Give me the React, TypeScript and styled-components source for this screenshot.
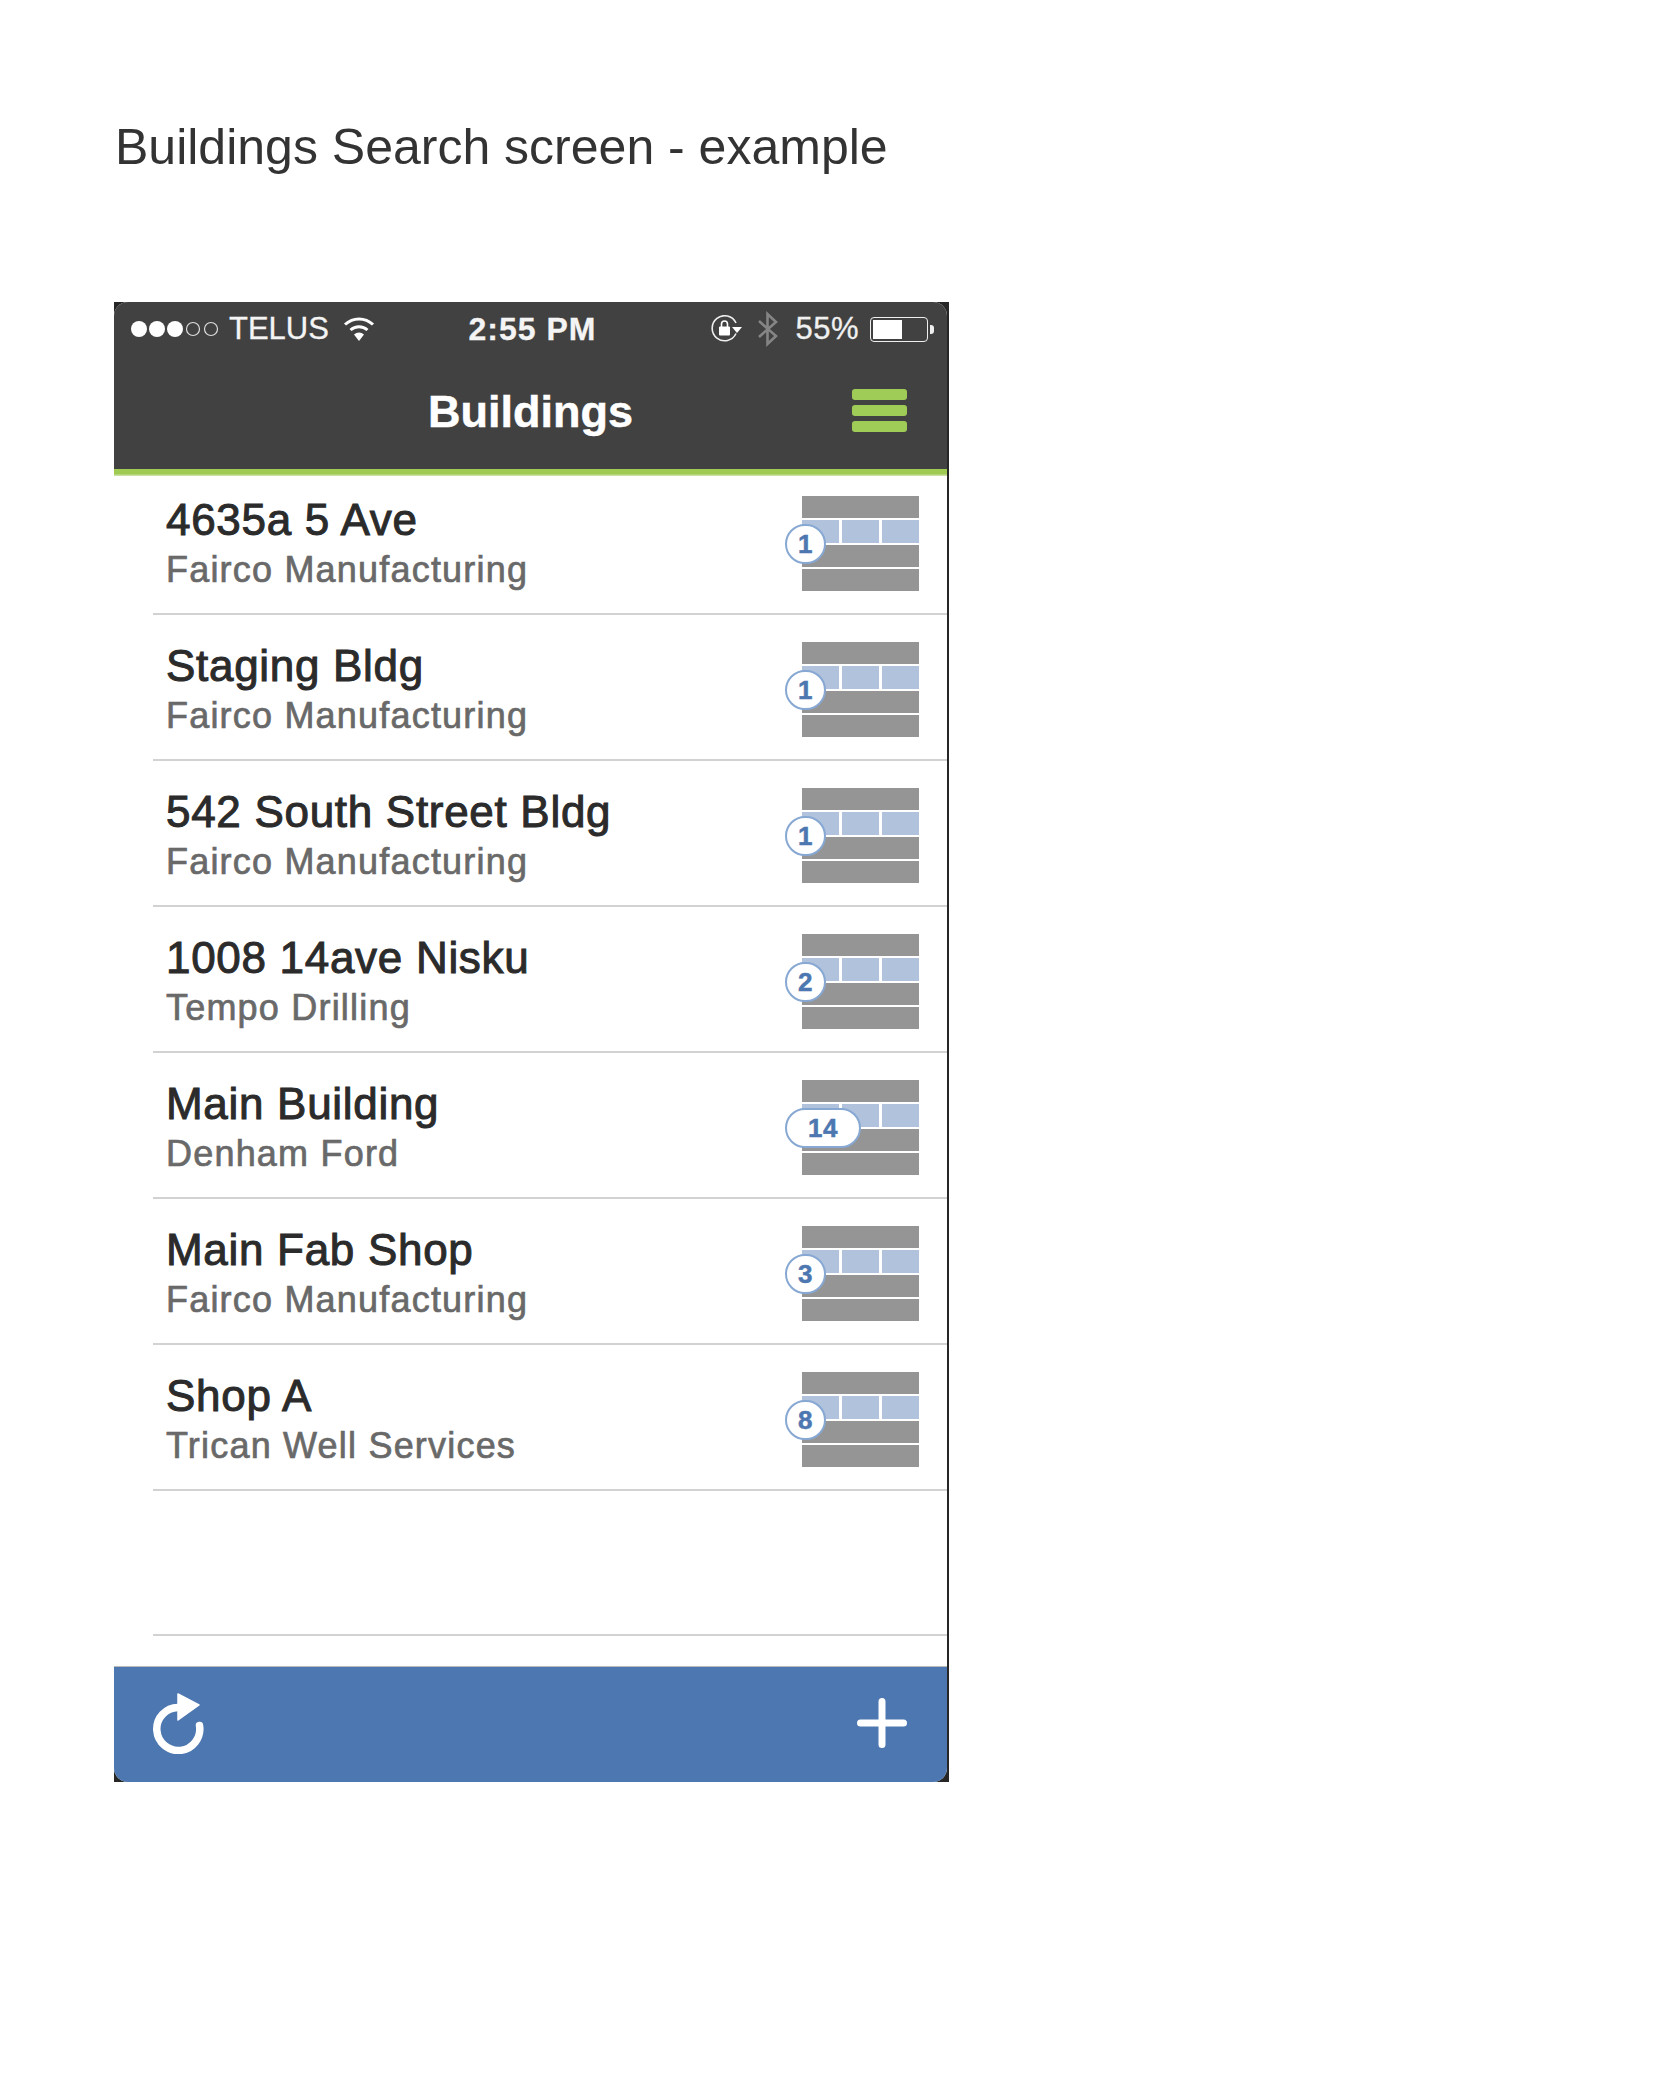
import styled, { createGlobalStyle } from "styled-components";

const buildings = [
  { name: "4635a 5 Ave", owner: "Fairco Manufacturing", count: 1 },
  { name: "Staging Bldg", owner: "Fairco Manufacturing", count: 1 },
  { name: "542 South Street Bldg", owner: "Fairco Manufacturing", count: 1 },
  { name: "1008 14ave Nisku", owner: "Tempo Drilling", count: 2 },
  { name: "Main Building", owner: "Denham Ford", count: 14 },
  { name: "Main Fab Shop", owner: "Fairco Manufacturing", count: 3 },
  { name: "Shop A", owner: "Trican Well Services", count: 8 },
];

export default function App() {
  return (
    <Page>
      <GlobalStyle />
      <Heading>Buildings Search screen - example</Heading>
      <Phone>
        <Screen>
          <Header>
            <StatusBar>
              <StatusLeft>
                <SignalDots />
                <Carrier>TELUS</Carrier>
                <WifiIcon />
              </StatusLeft>
              <Clock>2:55 PM</Clock>
              <StatusRight>
                <RotationLockIcon />
                <BluetoothIcon />
                <Percent>55%</Percent>
                <Battery>
                  <BatteryFill />
                </Battery>
              </StatusRight>
            </StatusBar>
            <NavBar>
              <NavTitle>Buildings</NavTitle>
              <MenuButton>
                <MenuBar />
                <MenuBar />
                <MenuBar />
              </MenuButton>
            </NavBar>
          </Header>
          <GreenRule />
          <List>
            {buildings.map((building) => (
              <Row key={building.name}>
                <RowText>
                  <RowTitle>{building.name}</RowTitle>
                  <RowOwner>{building.owner}</RowOwner>
                </RowText>
                <FloorIcon>
                  <FloorBar />
                  <WindowStrip>
                    <WindowPane />
                    <WindowPane />
                    <WindowPane />
                  </WindowStrip>
                  <FloorBar />
                  <FloorBar />
                  <CountBadge $wide={building.count > 9}>
                    {building.count}
                  </CountBadge>
                </FloorIcon>
              </Row>
            ))}
            <Row />
          </List>
          <Toolbar>
            <RefreshIcon />
            <PlusIcon />
          </Toolbar>
        </Screen>
      </Phone>
    </Page>
  );
}

function SignalDots() {
  return (
    <svg width="92" height="18" viewBox="0 0 92 18">
      <circle cx="9" cy="9" r="8" fill="#fff" />
      <circle cx="27" cy="9" r="8" fill="#fff" />
      <circle cx="45" cy="9" r="8" fill="#fff" />
      <circle cx="63" cy="9" r="6.5" fill="none" stroke="#ddd" strokeWidth="1.2" />
      <circle cx="81" cy="9" r="6.5" fill="none" stroke="#ddd" strokeWidth="1.2" />
    </svg>
  );
}

function WifiIcon() {
  return (
    <svg width="32" height="26" viewBox="0 0 32 26" fill="none" stroke="#fff">
      <path d="M2 8.5C10 1 22 1 30 8.5" strokeWidth="3" />
      <path d="M7.5 14C12.5 9.5 19.5 9.5 24.5 14" strokeWidth="3" />
      <path d="M11 18.5L16 25L21 18.5C18 15.8 14 15.8 11 18.5Z" fill="#fff" stroke="none" />
    </svg>
  );
}

function RotationLockIcon() {
  return (
    <svg width="32" height="28" viewBox="0 0 32 28" fill="none">
      <path d="M25 18.5A12.5 12.5 0 1 1 25 8" stroke="#eee" strokeWidth="1.6" />
      <path d="M21 12H31L26 18Z" fill="#fff" />
      <rect x="8" y="11.5" width="11" height="9" rx="1" fill="#fff" />
      <path d="M10.5 12V9A3 3 0 0 1 16.5 9V12" stroke="#fff" strokeWidth="1.6" />
    </svg>
  );
}

function BluetoothIcon() {
  return (
    <svg width="22" height="36" viewBox="0 0 22 36" fill="none">
      <path d="M2 10L19 25L10.5 33V3L19 11L2 26" stroke="#858585" strokeWidth="2.6" />
    </svg>
  );
}

function RefreshIcon() {
  return (
    <svg width="54" height="62" viewBox="0 0 54 62" fill="none">
      <path
        d="M47.5 33.5A21.5 21.5 0 1 1 26 15.5"
        stroke="#fff"
        strokeWidth="7.5"
        strokeLinecap="round"
      />
      <path d="M26 2L47 13L26 28Z" fill="#fff" stroke="#fff" strokeWidth="1.5" strokeLinejoin="round" />
    </svg>
  );
}

function PlusIcon() {
  return (
    <svg width="50" height="50" viewBox="0 0 50 50" fill="none">
      <path
        d="M25 3.5V46.5M3.5 25H46.5"
        stroke="#fff"
        strokeWidth="7"
        strokeLinecap="round"
      />
    </svg>
  );
}

const GlobalStyle = createGlobalStyle`
  body {
    margin: 0;
    background: #fff;
    font-family: "Liberation Sans", Arial, sans-serif;
  }
`;

const Page = styled.div`
  min-height: 2084px;
  padding: 117px 0 0 114px;
  box-sizing: border-box;
`;

const Heading = styled.h1`
  margin: 0 0 125px 1px;
  font-size: 50px;
  line-height: 60px;
  font-weight: 400;
  color: #333;
`;

const Phone = styled.div`
  width: 833px;
  background: #262626;
  padding-right: 2px;
`;

const Screen = styled.div`
  background: #fff;
  border-radius: 14px;
  overflow: hidden;
`;

const Header = styled.header`
  background: #414141;
  height: 167px;
`;

const GreenRule = styled.div`
  height: 7px;
  background: linear-gradient(#9fcb52 65%, #d5e6b5);
`;

const StatusBar = styled.div`
  display: grid;
  grid-template-columns: 1fr auto 1fr;
  align-items: center;
  height: 54px;
  padding: 0 12px 0 16px;
  color: #fff;
  font-size: 31px;
`;

const StatusLeft = styled.div`
  display: flex;
  align-items: center;
  gap: 7px;

  svg:last-child {
    margin-left: 7px;
  }
`;

const Carrier = styled.span`
  font-size: 31px;
  color: #f4f4f4;
  -webkit-text-stroke: 0.3px #f4f4f4;
`;

const Clock = styled.span`
  font-weight: 700;
  font-size: 32px;
  letter-spacing: 1px;
  color: #f4f4f4;
  -webkit-text-stroke: 0.3px #f4f4f4;
`;

const StatusRight = styled.div`
  display: flex;
  align-items: center;
  justify-content: flex-end;
  gap: 14px;
`;

const Percent = styled.span`
  font-size: 31px;
  letter-spacing: 0.5px;
  color: #f0f0f0;
  margin-left: 2px;
  margin-right: -3px;
  -webkit-text-stroke: 0.3px #f0f0f0;
`;

const Battery = styled.div`
  position: relative;
  width: 58px;
  height: 25px;
  box-sizing: border-box;
  border: 1px solid #eee;
  border-radius: 4px;
  padding: 2px;
  margin-right: 7px;

  &::after {
    content: "";
    position: absolute;
    right: -7px;
    top: 7px;
    width: 4px;
    height: 9px;
    background: #eee;
    border-radius: 0 3px 3px 0;
  }
`;

const BatteryFill = styled.div`
  width: 55%;
  height: 100%;
  background: #fff;
`;

const NavBar = styled.div`
  position: relative;
  display: flex;
  align-items: center;
  justify-content: center;
  height: 113px;
  padding-bottom: 2px;
  box-sizing: border-box;
`;

const NavTitle = styled.h2`
  margin: 0;
  color: #fff;
  font-size: 45px;
  font-weight: 700;
  -webkit-text-stroke: 0.5px #fff;
`;

const MenuButton = styled.div`
  position: absolute;
  right: 40px;
  top: 33px;
  display: flex;
  flex-direction: column;
  gap: 5px;
  width: 55px;
`;

const MenuBar = styled.span`
  display: block;
  height: 11px;
  border-radius: 3px;
  background: #9fcc56;
`;

const List = styled.div`
  padding-bottom: 30px;
`;

const Row = styled.div`
  display: flex;
  justify-content: space-between;
  margin-left: 39px;
  height: 146px;
  padding: 27px 28px 0 13px;
  box-sizing: border-box;
  border-bottom: 2px solid #d2d2d2;

  &:first-child {
    height: 139px;
    padding-top: 20px;
  }

  &:last-child {
    height: 145px;
  }
`;

const RowText = styled.div`
  display: flex;
  flex-direction: column;
  margin-top: -2px;
`;

const RowTitle = styled.div`
  font-size: 44px;
  line-height: 52px;
  letter-spacing: 0.7px;
  color: #2b2b2b;
  -webkit-text-stroke: 1px #2b2b2b;
`;

const RowOwner = styled.div`
  font-size: 36px;
  line-height: 44px;
  margin-top: 2px;
  letter-spacing: 1.2px;
  color: #696969;
  -webkit-text-stroke: 0.7px #696969;
`;

const FloorIcon = styled.div`
  position: relative;
  display: flex;
  flex-direction: column;
  gap: 2px;
  width: 117px;
`;

const FloorBar = styled.div`
  height: 22px;
  background: #959595;
`;

const WindowStrip = styled.div`
  display: grid;
  grid-template-columns: 1fr 1fr 1fr;
  gap: 3px;
`;

const WindowPane = styled.div`
  height: 23px;
  background: #b1c2dd;
`;

const CountBadge = styled.div<{ $wide: boolean }>`
  position: absolute;
  left: -17px;
  top: 28px;
  width: ${(p) => (p.$wide ? "76px" : "41px")};
  height: 40px;
  box-sizing: border-box;
  border: 2px solid #87a8d2;
  border-radius: 20px;
  background: #fff;
  color: #4d77b0;
  font-size: 26px;
  font-weight: 700;
  letter-spacing: 0.5px;
  -webkit-text-stroke: 0.5px #4d77b0;
  display: flex;
  align-items: center;
  justify-content: center;
`;

const Toolbar = styled.footer`
  display: flex;
  align-items: center;
  justify-content: space-between;
  height: 116px;
  padding: 0 40px 4px 38px;
  box-sizing: border-box;
  background: #4d77b0;
  border-top: 1px solid #b9b9b9;
`;
